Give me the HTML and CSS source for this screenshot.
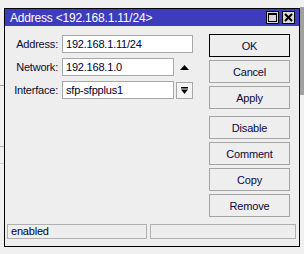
FILE: index.html
```html
<!DOCTYPE html>
<html lang="en">
<head>
  <meta charset="UTF-8">
  <title>Address</title>
  <link rel="stylesheet" href="styles.css">
</head>
<body>
  <div class="window">
    <div class="titlebar">
      <span class="title">Address &lt;192.168.1.11/24&gt;</span>
      <div class="tb-btns">
        <span class="tb-btn">
          <svg width="11" height="11" viewBox="0 0 11 11"><rect x="1.5" y="1.5" width="8" height="8" fill="none" stroke="#000" stroke-width="1"/><rect x="1" y="1" width="9" height="2" fill="#000"/></svg>
        </span>
        <span class="tb-btn">
          <svg width="11" height="11" viewBox="0 0 11 11"><path d="M2 2 L9 9 M9 2 L2 9" stroke="#000" stroke-width="2"/></svg>
        </span>
      </div>
    </div>

    <div class="content">
      <div class="form">
        <div class="row">
          <label>Address:</label>
          <div class="field wide">192.168.1.11/24</div>
        </div>
        <div class="row">
          <label>Network:</label>
          <div class="field">192.168.1.0</div>
          <span class="side">
            <svg width="9" height="5" viewBox="0 0 9 5"><path d="M0 5 L4.5 0 L9 5 Z" fill="#000"/></svg>
          </span>
        </div>
        <div class="row">
          <label>Interface:</label>
          <div class="field">sfp-sfpplus1</div>
          <span class="side drop">
            <svg width="7" height="7" viewBox="0 0 7 7"><rect x="0" y="0" width="7" height="1.5" fill="#000"/><path d="M0 2.5 L7 2.5 L3.5 7 Z" fill="#000"/></svg>
          </span>
        </div>
      </div>

      <div class="buttons">
        <button class="btn default">OK</button>
        <button class="btn">Cancel</button>
        <button class="btn">Apply</button>
        <button class="btn spaced">Disable</button>
        <button class="btn">Comment</button>
        <button class="btn">Copy</button>
        <button class="btn">Remove</button>
      </div>
    </div>

    <div class="status">
      <div class="cell">enabled</div>
      <div class="cell grow"></div>
    </div>
  </div>
</body>
</html>
```

FILE: styles.css
```css
body {
  margin: 0;
  width: 304px;
  height: 254px;
  overflow: hidden;
  font-family: "Liberation Sans", Arial, sans-serif;
  font-size: 11px;
  letter-spacing: -0.2px;
  color: #0a0a2a;
  /* what shows of the window behind */
  background:
    linear-gradient(#a0a0a0, #a0a0a0) right 0 top 7px / 4px 88px no-repeat,
    linear-gradient(#9a9a9a, #9a9a9a) left 0 top 85px / 4px 1px no-repeat,
    linear-gradient(#b0b0b0, #b0b0b0) left 0 top 146px / 4px 1px no-repeat,
    linear-gradient(#d0d0d0, #d0d0d0) left 0 top 163px / 4px 1px no-repeat,
    #f0f0f0;
}

.window {
  box-sizing: border-box;
  margin: 8px 0 0 4px;
  width: 296px;
  height: 239px;
  border: 1px solid #000;
  background: #eeeeee;
  display: flex;
  flex-direction: column;
}

.titlebar {
  height: 17px;
  background: #3c3cbc;
  color: #fff;
  display: flex;
  align-items: center;
  justify-content: space-between;
  padding: 0 4px 0 5px;
  font-size: 12px;
}

.tb-btns {
  display: flex;
  gap: 3px;
}

.tb-btn {
  box-sizing: border-box;
  width: 13px;
  height: 13px;
  background: #d8d8d8;
  border: 1px solid #000;
  display: flex;
  align-items: center;
  justify-content: center;
}

.tb-btn svg { display: block; }

.content {
  flex: 1;
  display: flex;
  gap: 16px;
  padding-right: 8px;
}

.form {
  width: 188px;
  padding-top: 9px;
  display: flex;
  flex-direction: column;
  gap: 5px;
}

.row {
  display: flex;
  align-items: center;
  height: 18px;
}

.row label {
  width: 53px;
  margin-right: 4px;
  text-align: right;
}

.field {
  box-sizing: border-box;
  width: 112px;
  height: 18px;
  line-height: 16px;
  padding-left: 3px;
  background: #fff;
  border: 1px solid #a8a8a8;
  color: #000030;
}

.field.wide { width: 131px; }

.side {
  box-sizing: border-box;
  width: 17px;
  height: 17px;
  margin-left: 2px;
  display: flex;
  align-items: center;
  justify-content: center;
}

.side.drop {
  border: 1px solid #a8a8a8;
  background: #f4f4f4;
}

.side svg { display: block; }

.buttons {
  width: 81px;
  padding-top: 8px;
  display: flex;
  flex-direction: column;
  gap: 3px;
}

.btn {
  box-sizing: border-box;
  height: 23px;
  margin: 0;
  padding: 0;
  font: inherit;
  letter-spacing: inherit;
  color: #0a0a3a;
  background: #eeeeee;
  border: 1px solid #a4a4a4;
  border-radius: 0;
}

.btn.default { border-color: #000; }
.btn.spaced { margin-top: 4px; }

.status {
  display: flex;
  gap: 3px;
  padding: 0 3px 7px 2px;
}

.cell {
  box-sizing: border-box;
  width: 140px;
  height: 15px;
  line-height: 13px;
  padding-left: 3px;
  border: 1px solid #b0b0b0;
  color: #000030;
}

.cell.grow { flex: 1; }
```
